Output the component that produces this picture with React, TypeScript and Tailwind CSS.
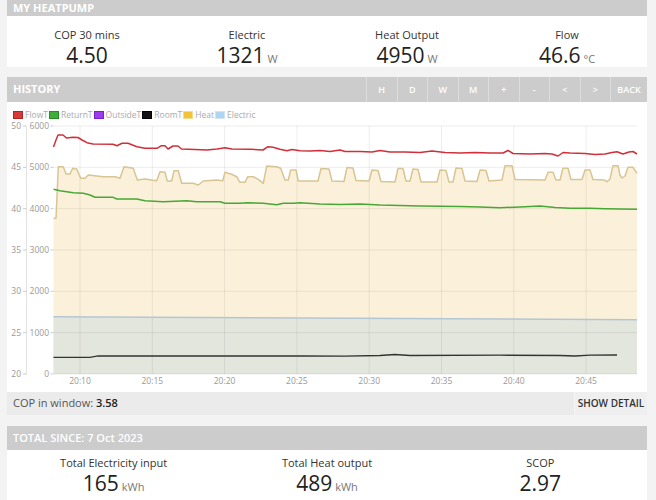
import React from 'react'

type Pt = [number, number]

// chart drawn in page coordinates (viewBox matches the panel position)
const flowT: Pt[] = [
  [53.5, 147], [56, 140], [58, 135], [63, 135], [66.5, 138], [73, 137.3], [78, 137.5], [82, 140], [87, 142.7],
  [93, 144], [113, 144.3], [117, 145.7], [122, 143.3], [128, 143.3], [137, 146.7], [145, 148.3], [157, 148.3],
  [161.5, 145.7], [165, 145.7], [168, 149], [173, 146], [178, 146], [181.5, 149], [195, 149.5], [207, 150],
  [217, 149], [225, 147.7], [232, 149], [250, 149.3], [263, 150], [268, 146.7], [273, 147.3], [280, 149.3],
  [287, 150.7], [292, 149.5], [300, 150.7], [310, 151], [320, 150.5], [330, 151.5], [340, 150], [345, 151.5],
  [360, 151.5], [372, 152], [380, 150.5], [390, 152], [405, 152], [420, 152.5], [432, 151], [445, 152.5],
  [460, 153], [475, 152.5], [490, 153], [503, 153], [508, 150.5], [513, 153.5], [530, 154], [545, 153.5],
  [552, 154], [558, 156], [563, 152.5], [570, 153], [585, 153.5], [595, 154.5], [605, 154], [612, 152.5],
  [617, 151.7], [623, 154], [629, 152], [633, 151.5], [637, 154],
]

const heat: Pt[] = [
  [53.5, 218.3], [56, 218.3], [58.3, 166.7], [63.3, 166.7], [66, 174], [70, 174], [72.7, 168.3], [76.7, 169],
  [80.7, 178.3], [85, 178.3], [88.3, 175], [96.7, 176], [103.3, 176.7], [115, 176.7], [120, 178.3], [124, 166.7],
  [133.3, 168.3], [137.3, 180], [145, 179], [151.7, 180], [156.7, 180.7], [160, 171.7], [165, 172.3], [167.3, 181],
  [171.7, 181], [174, 170.7], [178.3, 170.7], [181.7, 183.3], [193.3, 183.3], [198.3, 185], [203.3, 181],
  [216.7, 180], [222.7, 180.7], [225, 172.3], [231.7, 174.3], [236.7, 176.7], [240, 182.3], [245, 182.3],
  [247.7, 176.7], [253.3, 176.7], [258.3, 179.3], [263.3, 183.3], [266.7, 166], [276.7, 166.7], [280.7, 168.3],
  [285, 180], [288.3, 180], [290.7, 170], [296, 170], [298.3, 181], [318, 181], [321, 168.5], [329, 169],
  [332, 181], [344, 181.5], [347, 167.5], [353, 168], [356, 180.5], [369, 181], [372, 170], [378, 170.5],
  [381, 181.5], [395, 182], [398, 168.5], [403, 168.5], [406, 181], [410, 181], [413, 169], [418, 169.5],
  [421, 182], [437, 182], [440, 170], [446, 170.5], [449, 182], [453, 182], [456, 168], [462, 168.5],
  [465, 181], [477, 181.5], [480, 170], [486, 170.5], [489, 181], [502, 180], [505, 165.7], [512, 165.7],
  [515, 179.5], [545, 180], [548, 172.3], [553, 172.3], [556, 180], [560, 180], [563, 168.3], [568, 168.3],
  [571, 179.5], [582, 179.5], [585, 170], [590, 170], [593, 179.5], [604, 180], [607, 181.7], [610, 179],
  [613, 165.7], [618, 165.7], [620, 175], [622, 178], [625, 176], [628, 167.3], [633, 167.3], [637, 173.3],
]

const returnT: Pt[] = [
  [53.5, 189.3], [60, 190.7], [66.7, 191.7], [73.3, 192.7], [83.3, 193.3], [90, 195], [95, 197.3], [113.3, 197.3],
  [116.7, 199], [136.7, 199], [145, 200.7], [163.3, 201.7], [186.7, 200.7], [196.7, 201.7], [220, 201.7],
  [225, 203.3], [240, 203.3], [246.7, 202.7], [263.3, 203.3], [270, 204], [276.7, 204.7], [283.3, 203.3],
  [293.3, 203.3], [300, 202.7], [320, 204], [340, 204.5], [360, 204], [380, 205], [400, 205.5], [420, 206],
  [440, 206.3], [460, 206.5], [480, 207], [500, 207.7], [520, 207], [540, 206], [555, 207.5], [570, 208.3],
  [590, 208.3], [605, 208.7], [620, 209], [637, 209.3],
]

const electric: Pt[] = [[53.5, 316.7], [150, 317.3], [300, 318], [450, 318.8], [637, 319.7]]

const roomT: Pt[] = [
  [53.5, 357.3], [90, 357.3], [98, 355.8], [200, 356], [300, 356], [345, 356.2], [380, 355.5], [395, 354.5],
  [410, 355.5], [500, 355.2], [560, 355.5], [575, 356], [590, 355.2], [617, 355],
]

const line = (p: Pt[]) => p.map((q, i) => `${i ? 'L' : 'M'}${q[0]} ${q[1]}`).join(' ')
const area = (p: Pt[]) => `${line(p)} L637 374 L53.5 374 Z`

const TOP = 126
const STEP = 41.33
const temps = [50, 45, 40, 35, 30, 25, 20]
const watts = [6000, 5000, 4000, 3000, 2000, 1000, 0]
const times = ['20:10', '20:15', '20:20', '20:25', '20:30', '20:35', '20:40', '20:45']

function Chart() {
  return (
    <svg width={640} height={272} viewBox="7 120 640 272" className="block">
      <path d={area(heat)} fill="#fbf1da" />
      <path d={area(electric)} fill="#e3e6dd" />
      {temps.map((_, i) => (
        <line key={i} x1={53.5} x2={637} y1={TOP + i * STEP} y2={TOP + i * STEP} stroke="#000" strokeOpacity={0.07} />
      ))}
      {times.map((_, k) => (
        <line key={k} x1={80 + k * 72.3} x2={80 + k * 72.3} y1={TOP} y2={374} stroke="#000" strokeOpacity={0.07} />
      ))}
      <line x1={26.5} x2={26.5} y1={TOP} y2={374} stroke="#e2e2e2" />
      {temps.map((t, i) => (
        <g key={t}>
          <line x1={23} x2={26.5} y1={TOP + i * STEP} y2={TOP + i * STEP} stroke="#ccc" />
          <text x={21} y={TOP + i * STEP + 3} textAnchor="end" fontSize={8.5} fill="#999">{t}</text>
          <line x1={50.5} x2={53.5} y1={TOP + i * STEP} y2={TOP + i * STEP} stroke="#ccc" />
          <text x={49} y={TOP + i * STEP + 3} textAnchor="end" fontSize={8.5} fill="#999">{watts[i]}</text>
        </g>
      ))}
      {times.map((t, k) => (
        <text key={t} x={80 + k * 72.3} y={384} textAnchor="middle" fontSize={8.5} fill="#999">{t}</text>
      ))}
      <path d={line(electric)} fill="none" stroke="#b4c6d4" strokeWidth={1.5} />
      <path d={line(heat)} fill="none" stroke="#d8c593" strokeWidth={1.5} strokeLinejoin="round" />
      <path d={line(returnT)} fill="none" stroke="#47a834" strokeWidth={1.5} strokeLinejoin="round" />
      <path d={line(flowT)} fill="none" stroke="#d0303a" strokeWidth={1.5} strokeLinejoin="round" />
      <path d={line(roomT)} fill="none" stroke="#333" strokeWidth={1.3} />
    </svg>
  )
}

const legend = [
  { label: 'FlowT', box: 'bg-[#d9383a] border-[#b02424]' },
  { label: 'ReturnT', box: 'bg-[#3fae3a] border-[#2a8a26]' },
  { label: 'OutsideT', box: 'bg-[#9b3cf0] border-[#7a22cc]' },
  { label: 'RoomT', box: 'bg-[#111] border-[#000]' },
  { label: 'Heat', box: 'bg-[#f3c23c] border-[#f7dc8c]' },
  { label: 'Electric', box: 'bg-[#aed6f3] border-[#cfe5f6]' },
]

function Stat({ label, value, unit }: { label: string; value: string; unit?: string }) {
  return (
    <div className="flex flex-col items-center">
      <div className="text-[11px] leading-[13px] text-[#333]">{label}</div>
      <div className="mt-[4px] text-[21px] leading-[20px] text-[#222]">
        {value}
        {unit && <span className="ml-[3px] text-[11px] text-[#777]">{unit}</span>}
      </div>
    </div>
  )
}

const buttons = ['H', 'D', 'W', 'M', '+', '-', '<', '>']

export default function App() {
  return (
    <div className="h-[500px] w-[656px] overflow-hidden bg-[#f3f3f3] pl-[7px] pr-[9px] font-['Open_Sans','Liberation_Sans',sans-serif]">
      <div className="h-[16px] bg-[#cccccc] px-[6px] pt-[2px] text-[11px] font-bold leading-[12px] text-white">MY HEATPUMP</div>
      <div className="grid h-[51px] grid-cols-4 bg-white pt-[12px]">
        <Stat label="COP 30 mins" value="4.50" />
        <Stat label="Electric" value="1321" unit="W" />
        <Stat label="Heat Output" value="4950" unit="W" />
        <Stat label="Flow" value="46.6" unit="°C" />
      </div>

      <div className="mt-[10px] flex h-[25px] items-center bg-[#cccccc] text-white">
        <div className="flex-1 pl-[6px] text-[11px] font-bold">HISTORY</div>
        {buttons.map((b) => (
          <div key={b} className="flex h-full w-[30.5px] items-center justify-center border-l border-[#dddddd] text-[9px] font-semibold">
            {b}
          </div>
        ))}
        <div className="flex h-full w-[37px] items-center justify-center border-l border-[#dddddd] text-[9px] font-semibold">BACK</div>
      </div>

      <div className="h-[290px] bg-white">
        <div className="flex h-[18px] items-start pl-[6px] pt-[8px] text-[8.5px] leading-[10px] text-[#aaa]">
          {legend.map((l) => (
            <div key={l.label} className="mr-[1px] flex items-center">
              <span className={`mr-[2px] inline-block h-[8px] w-[10px] border ${l.box}`} />
              {l.label}
            </div>
          ))}
        </div>
        <Chart />
      </div>

      <div className="flex h-[23px] items-center bg-[#ebebeb] text-[11px] text-[#555]">
        <div className="flex-1 pl-[6px]">
          COP in window: <span className="font-semibold text-[#222]">3.58</span>
        </div>
        <div className="flex h-full w-[73px] items-center justify-center border-l border-[#f5f5f5] bg-[#efefef] text-[10px] font-semibold text-[#333]">
          SHOW DETAIL
        </div>
      </div>

      <div className="mt-[11px] flex h-[24px] items-center bg-[#cccccc] px-[6px] text-[11px] font-semibold text-white">
        TOTAL SINCE: 7 Oct 2023
      </div>
      <div className="grid h-[60px] grid-cols-3 bg-white pt-[6px]">
        <Stat label="Total Electricity input" value="165" unit="kWh" />
        <Stat label="Total Heat output" value="489" unit="kWh" />
        <Stat label="SCOP" value="2.97" />
      </div>
    </div>
  )
}
